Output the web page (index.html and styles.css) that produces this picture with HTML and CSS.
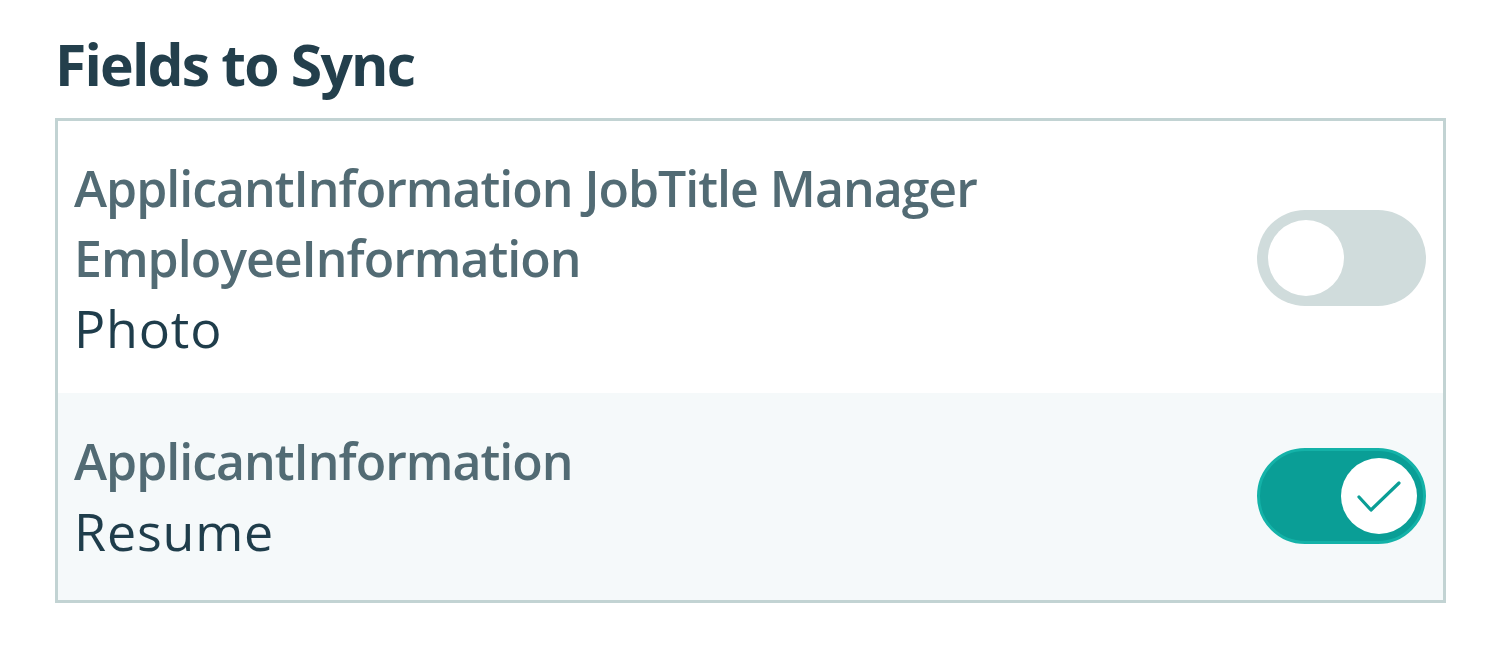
FILE: index.html
```html
<!DOCTYPE html>
<html lang="en">
<head>
    <meta charset="UTF-8">
    <title>Fields to Sync</title>
    <link rel="stylesheet" href="styles.css">
</head>
<body>
    <div class="panel">
        <h1>Fields to Sync</h1>
        <div class="field-list">
            <div class="field-row">
                <div class="field-text">
                    <div class="field-path">ApplicantInformation JobTitle Manager<br>EmployeeInformation</div>
                    <div class="field-name">Photo</div>
                </div>
                <div class="toggle"><span class="knob"></span></div>
            </div>
            <div class="field-row alt">
                <div class="field-text">
                    <div class="field-path">ApplicantInformation</div>
                    <div class="field-name">Resume</div>
                </div>
                <div class="toggle on">
                    <span class="knob">
                        <svg width="50" height="50" viewBox="0 0 50 50">
                            <path d="M5 26 L17 39 L45 12" fill="none" stroke="#0a9e96" stroke-width="3.2" stroke-linecap="round" stroke-linejoin="round"/>
                        </svg>
                    </span>
                </div>
            </div>
        </div>
    </div>
</body>
</html>
```

FILE: styles.css
```css
* {
    margin: 0;
    padding: 0;
    box-sizing: border-box;
}

body {
    font-family: "Open Sans", "Noto Sans", sans-serif;
    background: #ffffff;
    color: #1f3d4b;
}

.panel {
    padding: 24px 54px 0 55px;
}

h1 {
    font-size: 57px;
    font-weight: 700;
    color: #233f4c;
    line-height: 80px;
    letter-spacing: -1.8px;
    margin-bottom: 14px;
}

.field-list {
    border: 3px solid #c2d3d3;
}

.field-row {
    display: flex;
    align-items: center;
    justify-content: space-between;
    padding: 32px 17px 30px 16px;
    background: #ffffff;
}

.field-row.alt {
    background: #f5f9fa;
    padding: 33px 17px 34px 16px;
}

.field-text {
    font-size: 50px;
    line-height: 70px;
}

.field-path {
    font-weight: 600;
    color: #526b74;
    letter-spacing: -1px;
}

.field-name {
    font-size: 52px;
    font-weight: 400;
    color: #1f3d4b;
    letter-spacing: 0.8px;
}

.toggle {
    width: 169px;
    height: 96px;
    border-radius: 48px;
    background: #d0dcdc;
    display: flex;
    align-items: center;
    padding: 0 11px;
}

.toggle .knob {
    width: 76px;
    height: 76px;
    border-radius: 50%;
    background: #ffffff;
    display: flex;
    align-items: center;
    justify-content: center;
}

.toggle.on {
    background: #0a9e96;
    border: 3px solid #14b2a8;
    justify-content: flex-end;
    padding: 0 6px;
}
```
